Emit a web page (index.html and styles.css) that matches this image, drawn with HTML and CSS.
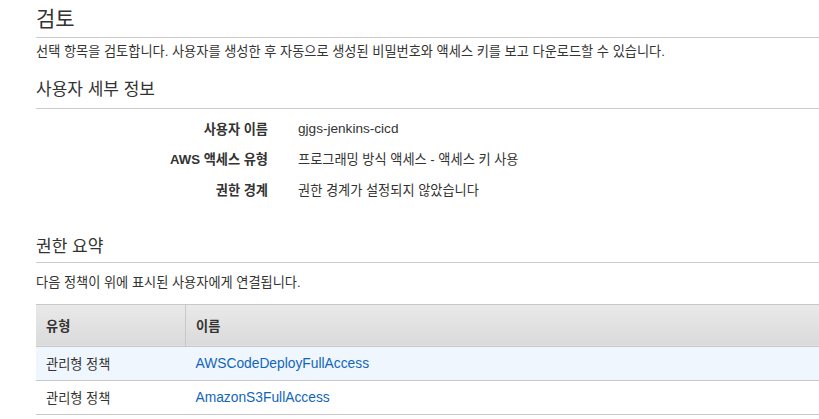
FILE: index.html
```html
<!DOCTYPE html>
<html lang="ko">
<head>
<meta charset="utf-8">
<title>검토</title>
<link rel="stylesheet" href="styles.css">
</head>
<body>
<div class="page">
  <h1 class="title">검토</h1>
  <p class="intro">선택 항목을 검토합니다. 사용자를 생성한 후 자동으로 생성된 비밀번호와 액세스 키를 보고 다운로드할 수 있습니다.</p>

  <h2 class="section section-details">사용자 세부 정보</h2>
  <div class="details">
    <div class="label">사용자 이름</div>
    <div class="value latin">gjgs-jenkins-cicd</div>
    <div class="label">AWS 액세스 유형</div>
    <div class="value">프로그래밍 방식 액세스 - 액세스 키 사용</div>
    <div class="label">권한 경계</div>
    <div class="value">권한 경계가 설정되지 않았습니다</div>
  </div>

  <h2 class="section section-perms">권한 요약</h2>
  <p class="note">다음 정책이 위에 표시된 사용자에게 연결됩니다.</p>

  <table class="policies">
    <thead>
      <tr><th class="col-type">유형</th><th>이름</th></tr>
    </thead>
    <tbody>
      <tr class="hl"><td>관리형 정책</td><td><a href="#">AWSCodeDeployFullAccess</a></td></tr>
      <tr><td>관리형 정책</td><td><a href="#">AmazonS3FullAccess</a></td></tr>
    </tbody>
  </table>
</div>
</body>
</html>
```

FILE: styles.css
```css
html, body {
  margin: 0;
  padding: 0;
  background: #fff;
}
body {
  font-family: "Liberation Sans", "Noto Sans CJK KR", sans-serif;
  font-size: 13.2px;
  color: #333;
}
.page {
  padding-left: 36px;
  overflow: hidden;
}
.title {
  margin: 0;
  padding: 5px 0 4px;
  font-size: 21px;
  line-height: 28px;
  font-weight: normal;
  color: #333;
  border-bottom: 1px solid #ccc;
}
.intro {
  margin: 4px 0 0;
  line-height: 20px;
}
.section {
  margin: 0;
  font-size: 17px;
  line-height: 24px;
  font-weight: normal;
  color: #333;
  border-bottom: 1px solid #ccc;
}
.section-details {
  margin-top: 16px;
  padding-bottom: 6px;
}
.section-perms {
  margin-top: 30px;
  padding-bottom: 3px;
}
.details {
  display: grid;
  grid-template-columns: 232px 1fr;
  column-gap: 30px;
  grid-auto-rows: 30.5px;
  align-items: center;
  margin-top: 4px;
}
.label {
  text-align: right;
  font-weight: bold;
  color: #333;
}
.value {
  color: #333;
}
.value.latin {
  font-size: 13.6px;
}
.note {
  margin: 10px 0 0;
  line-height: 20px;
}
.policies {
  margin-top: 11px;
  width: calc(100% + 2px);
  border-collapse: collapse;
}
.policies th,
.policies td {
  text-align: left;
  padding: 0 10px;
  border-bottom: 1px solid #c8c8c8;
}
.policies th {
  height: 41px;
  font-weight: bold;
  color: #333;
  background: linear-gradient(#e9e9e9, #dadada);
  border-top: 1px solid #c8c8c8;
}
.policies th.col-type {
  width: 129px;
  border-right: 1px solid #c8c8c8;
}
.policies td {
  height: 33px;
  color: #333;
}
.policies tr.hl td {
  background: #eff6fe;
}
.policies a {
  font-size: 13.8px;
  color: #1166bb;
  text-decoration: none;
}
```
